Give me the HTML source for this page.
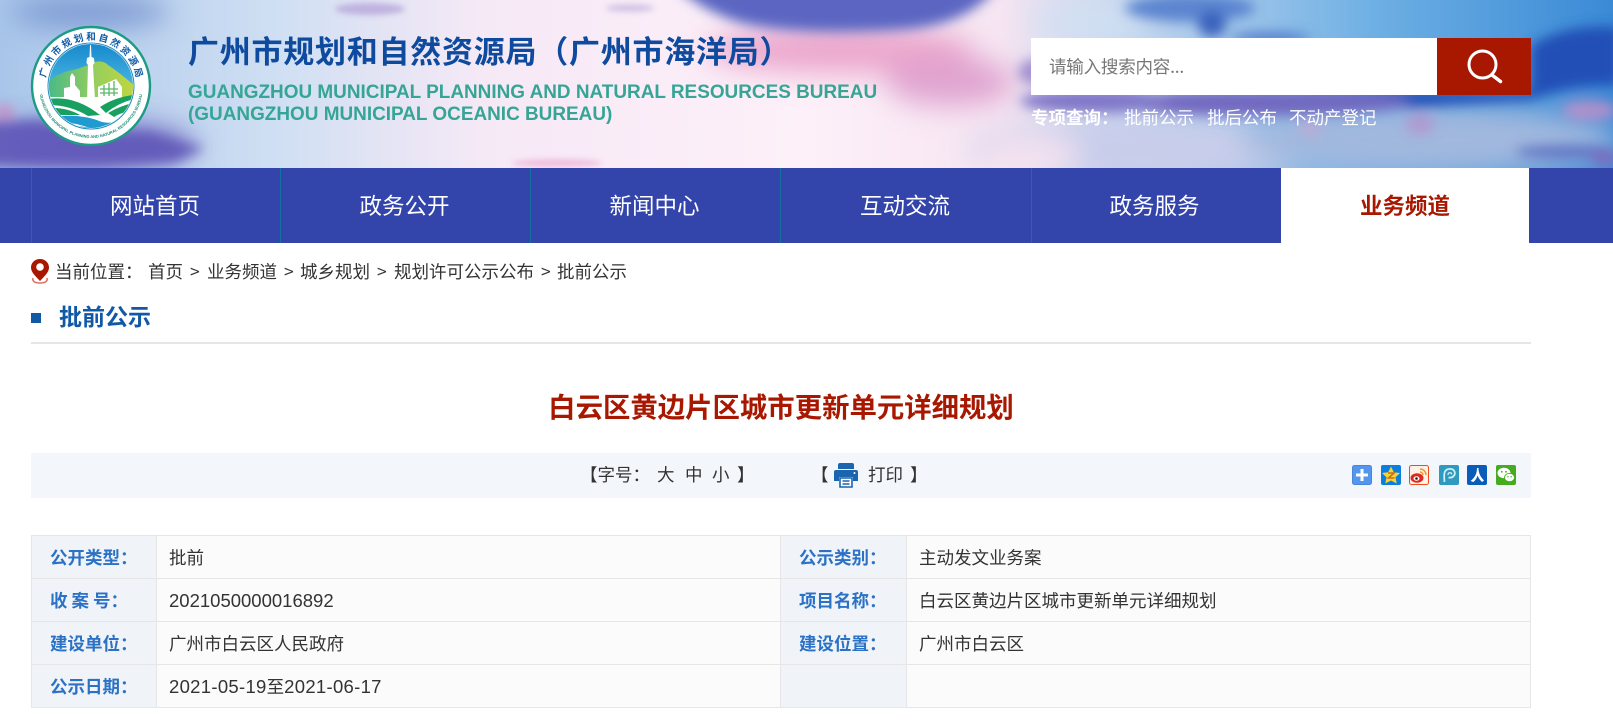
<!DOCTYPE html>
<html lang="zh"><head><meta charset="utf-8"><title>白云区黄边片区城市更新单元详细规划</title>
<style>
*{box-sizing:border-box;margin:0;padding:0}
html,body{width:1613px;height:726px;overflow:hidden;background:#fff}
body{position:relative;font-family:"Liberation Sans","Noto Sans CJK SC",sans-serif;font-size:17.5px;color:#333}
.a{position:absolute;white-space:nowrap;font-family:"Noto Sans CJK SC","Liberation Sans",sans-serif}
.nav{position:absolute;left:0;top:168px;width:1613px;height:75px;background:#3344aa}
.nav div{position:absolute;top:0;height:75px;line-height:75px;text-align:center;color:#fff;font-size:22.5px;border-left:1px solid #14709f;padding-right:2px;font-family:"Noto Sans CJK SC",sans-serif}
.l{position:absolute;background:#e6e6e6}
.lab{color:#2b72c6;font-weight:700;line-height:24px}
.val{color:#333;line-height:24px}
.dg{font-size:18.5px;font-family:"Liberation Sans",sans-serif}
.dt{letter-spacing:.3px}
.bc{top:260px;line-height:24px}
</style></head><body>
<svg class="a" style="left:0;top:0" width="1613" height="168" viewBox="0 0 1613 168">
<defs>
<linearGradient id="sky" x1="0" x2="1" y1="0" y2="0">
<stop offset="0" stop-color="#a9c6ea"/><stop offset=".17" stop-color="#cfdff3"/><stop offset=".3" stop-color="#f6e9f6"/><stop offset=".5" stop-color="#fdf0f9"/><stop offset=".62" stop-color="#f6e5f2"/><stop offset=".7" stop-color="#c3d5ee"/><stop offset=".85" stop-color="#6fb0e4"/><stop offset="1" stop-color="#3a8ad6"/>
</linearGradient>
<filter id="b1" x="-50%" y="-100%" width="200%" height="300%"><feGaussianBlur stdDeviation="14"/></filter>
<filter id="b2" x="-30%" y="-60%" width="160%" height="220%"><feGaussianBlur stdDeviation="6"/></filter>
<filter id="b3" x="-30%" y="-60%" width="160%" height="220%"><feGaussianBlur stdDeviation="3"/></filter>
</defs>
<rect width="1613" height="168" fill="url(#sky)"/>
<g filter="url(#b1)">
<ellipse cx="90" cy="12" rx="80" ry="15" fill="#6f8ccc" opacity=".85"/>
<ellipse cx="840" cy="50" rx="135" ry="24" fill="#eaa2ca" opacity=".95"/>
<ellipse cx="950" cy="82" rx="65" ry="24" fill="#dd9ccc" opacity=".9"/>
<ellipse cx="1140" cy="150" rx="170" ry="34" fill="#c8cdea"/>
<ellipse cx="1430" cy="140" rx="190" ry="34" fill="#a2b8de"/>
<ellipse cx="1030" cy="155" rx="50" ry="20" fill="#f4e2f0"/>
<ellipse cx="1090" cy="22" rx="60" ry="22" fill="#cfe0f3" opacity=".8"/>
<ellipse cx="90" cy="145" rx="105" ry="24" fill="#7068c2" opacity=".85"/>
</g>
<g filter="url(#b2)">
<path d="M-20 122 L40 120 L95 132 L150 132 L205 148 L175 162 L100 166 L-20 166Z" fill="#6158b8" opacity=".9"/>
<ellipse cx="4" cy="112" rx="10" ry="7" fill="#c98cc4"/>
<path d="M670 -20 L1000 -20 Q975 25 900 30 Q800 36 745 24 Q700 12 670 -20Z" fill="#5b66c2"/>
<ellipse cx="1190" cy="8" rx="65" ry="14" fill="#4e78cb" opacity=".85"/>
<ellipse cx="1212" cy="24" rx="14" ry="13" fill="#3a62bc"/>
<ellipse cx="1270" cy="38" rx="40" ry="5" fill="#4a72c8"/>
<path d="M1531 45 Q1570 22 1620 28 L1620 85 Q1570 84 1531 100 L1400 108 L1300 100 V90 H1531Z" fill="#2050b6"/>
<ellipse cx="1260" cy="103" rx="150" ry="13" fill="#7269c0"/>
<ellipse cx="1095" cy="101" rx="75" ry="12" fill="#8077c8"/>
<ellipse cx="1040" cy="72" rx="22" ry="14" fill="#a190cf"/>
<ellipse cx="1590" cy="110" rx="28" ry="10" fill="#c78ec8" opacity=".8"/>
<ellipse cx="1565" cy="152" rx="50" ry="7" fill="#5c6ec0" opacity=".85"/>
<ellipse cx="1420" cy="124" rx="14" ry="10" fill="#bd86c4" opacity=".6"/>
<ellipse cx="1310" cy="128" rx="12" ry="7" fill="#d8a0cc" opacity=".5"/>
<ellipse cx="1605" cy="158" rx="14" ry="9" fill="#8068bc" opacity=".8"/>
</g>
<g filter="url(#b3)">
<ellipse cx="370" cy="9" rx="35" ry="6" fill="#b7a6da" opacity=".8"/>
<ellipse cx="630" cy="8" rx="24" ry="4" fill="#c4b4de" opacity=".7"/>
<ellipse cx="557" cy="163" rx="45" ry="4" fill="#eeb4d8" opacity=".8"/>
</g>
</svg>

<svg class="a" style="left:30px;top:25px;filter:blur(.35px)" width="122" height="122" viewBox="0 0 122 122">
<defs><clipPath id="c"><circle cx="61" cy="61" r="42"/></clipPath>
<path id="tp1" d="M15 61 A46 46 0 0 1 107 61"/><path id="tp2" d="M9 61 A52 52 0 0 0 113 61"/>
<linearGradient id="lg" x1="0" x2="1"><stop offset="0" stop-color="#45b88a"/><stop offset=".6" stop-color="#9ccf5a"/><stop offset="1" stop-color="#c2d63e"/></linearGradient>
<linearGradient id="sk" x1="0" x2="0" y1="0" y2="1"><stop offset="0" stop-color="#1285cb"/><stop offset=".6" stop-color="#55bfe6"/></linearGradient></defs>
<circle cx="61" cy="61" r="59" fill="#fff" stroke="#1d9b84" stroke-width="2.4"/>
<circle cx="61" cy="61" r="43" fill="#fff" stroke="#1e8cc0" stroke-width="1"/>
<g clip-path="url(#c)">
<rect x="15" y="15" width="92" height="92" fill="url(#sk)"/>
<path d="M15 58 Q25 50 38 46 Q50 44 62 38 Q72 34 78 40 Q90 48 106 62 L106 80 L15 80Z" fill="url(#lg)"/>
<path d="M57 75 L58 40 L56.500 38 L57 33 L59.500 32 L60 20 L61 20 L61.500 32 L64 33 L64.500 38 L63 40 L65 75Z" fill="#fff"/>
<path d="M34 72 V63 L40 62 V52 L42 48 L45 52 V60 L50 66 V72Z" fill="#fff"/>
<path d="M68 72 V62 L86 54 L92 62 V72Z" fill="#fff"/>
<path d="M70 64 H88 M70 68 H88 M74 60 V71 M79 58 V71 M84 56 V71" stroke="#5bb86a" stroke-width="1.300"/>
<path d="M15 72 H106 V112 H15Z" fill="#fff"/>
<path d="M18 74 Q45 70 70 90 L58 91 Q40 80 18 80Z" fill="#18a060"/>
<path d="M18 83 Q36 82 50 90 L28 90Z" fill="#18a060"/>
<path d="M70 82 Q85 72 104 70 L104 74 Q88 78 76 88Z" fill="#18a060"/>
<path d="M78 88 Q92 80 104 78 L100 86 Q90 88 84 92Z" fill="#18a060"/>
<path d="M24 92 Q50 88 72 97 Q86 100 98 90 L92 100 Q76 106 60 103 Q40 96 26 98Z" fill="#1f9bd0"/>
<path d="M36 101 Q56 100 72 107 Q80 107 88 102 L74 110 Q50 108 36 101Z" fill="#1478c0"/>
</g>
<text font-size="9.500" font-weight="700" fill="#0f5aa5" font-family="Noto Sans CJK SC,sans-serif"><textPath href="#tp1" startOffset="50%" text-anchor="middle" textLength="128">广州市规划和自然资源局</textPath></text>
<text font-size="4" font-weight="700" fill="#1d8c78" font-family="Liberation Sans,sans-serif"><textPath href="#tp2" startOffset="50%" text-anchor="middle">GUANGZHOU MUNICIPAL PLANNING AND NATURAL RESOURCES BUREAU</textPath></text>
</svg>

<div class="a" style="left:188px;top:28px;line-height:44px;font-size:31px;font-weight:700;color:#0e4a9e;letter-spacing:.75px;filter:blur(.35px)">广州市规划和自然资源局（广州市海洋局）</div>
<div class="a" style="left:188px;top:81px;line-height:24px;font-family:'Liberation Sans',sans-serif;font-size:18.950px;font-weight:700;color:#36a596;filter:blur(.3px)">GUANGZHOU MUNICIPAL PLANNING AND NATURAL RESOURCES BUREAU</div>
<div class="a" style="left:188px;top:103px;line-height:24px;font-family:'Liberation Sans',sans-serif;font-size:18.950px;font-weight:700;color:#36a596;filter:blur(.3px)">(GUANGZHOU MUNICIPAL OCEANIC BUREAU)</div>

<div class="a" style="left:1031px;top:38px;width:406px;height:57px;background:#fff"></div>
<div class="a" style="left:1049px;top:54px;line-height:26px;color:#777;letter-spacing:-.2px">请输入搜索内容...</div>
<div class="a" style="left:1437px;top:38px;width:94px;height:57px;background:#a81700"></div>
<svg class="a" style="left:1465px;top:48px" width="38" height="38" viewBox="0 0 38 38"><circle cx="17.500" cy="16.500" r="13.500" fill="none" stroke="#fff" stroke-width="3"/><path d="M27 27 L35.500 33.500" stroke="#fff" stroke-width="3.500" stroke-linecap="round"/></svg>
<div class="a" style="left:1031px;top:105px;line-height:26px;color:#fff;font-weight:700">专项查询：</div>
<div class="a" style="left:1124px;top:105px;line-height:26px;color:#fff">批前公示</div>
<div class="a" style="left:1207px;top:105px;line-height:26px;color:#fff">批后公布</div>
<div class="a" style="left:1289px;top:105px;line-height:26px;color:#fff">不动产登记</div>

<div class="nav">
<div style="left:31px;width:249px">网站首页</div>
<div style="left:280px;width:250px">政务公开</div>
<div style="left:530px;width:250px">新闻中心</div>
<div style="left:780px;width:251px">互动交流</div>
<div style="left:1031px;width:250px;padding-right:4px">政务服务</div>
<div style="left:1281px;width:248px;background:#fff;color:#a81700;font-weight:700;border:0;padding-right:0">业务频道</div>
</div>

<svg class="a" style="left:30px;top:258px" width="20" height="26" viewBox="0 0 20 26"><path d="M10 1 C4.500 1 1 5 1 9.500 C1 14.500 6 18.500 10 23 C14 18.500 19 14.500 19 9.500 C19 5 15.500 1 10 1Z" fill="#a81700"/><circle cx="10" cy="9" r="3.800" fill="#fff"/><path d="M3 20 C2 24 6 25 10 25 C14 25 18 24 17 20" fill="none" stroke="#d4715e" stroke-width="1.500"/></svg>
<div class="a bc" style="left:55px">当前位置：</div>
<div class="a bc" style="left:148px">首页</div>
<div class="a bc" style="left:190px">&gt;</div>
<div class="a bc" style="left:207px">业务频道</div>
<div class="a bc" style="left:284px">&gt;</div>
<div class="a bc" style="left:300px">城乡规划</div>
<div class="a bc" style="left:377px">&gt;</div>
<div class="a bc" style="left:394px">规划许可公示公布</div>
<div class="a bc" style="left:541px">&gt;</div>
<div class="a bc" style="left:557px">批前公示</div>

<div class="a" style="left:31px;top:313px;width:10px;height:10px;background:#1158a5"></div>
<div class="a" style="left:59px;top:300px;line-height:30px;font-size:23px;font-weight:700;color:#1158a5">批前公示</div>
<div class="a" style="left:31px;top:342px;width:1500px;height:2px;background:#e6e6e6"></div>

<div class="a" style="left:31px;top:385px;width:1500px;text-align:center;line-height:40px;font-size:27.400px;font-weight:700;color:#a81700">白云区黄边片区城市更新单元详细规划</div>

<div class="a" style="left:31px;top:453px;width:1500px;height:45px;background:#f3f7fb"></div>
<div class="a" style="left:580px;top:463px;line-height:24px">【字号：</div>
<div class="a" style="left:657px;top:463px;line-height:24px">大</div>
<div class="a" style="left:685px;top:463px;line-height:24px">中</div>
<div class="a" style="left:712px;top:463px;line-height:24px">小</div>
<div class="a" style="left:737px;top:463px;line-height:24px">】</div>
<div class="a" style="left:811px;top:463px;line-height:24px">【</div>
<svg class="a" style="left:833px;top:462px" width="26" height="26" viewBox="0 0 26 26"><path d="M5 3 Q5 1 7 1 H19 Q21 1 21 3 V7 H5Z" fill="#1b64ae"/><path d="M3 8 H23 Q25 8 25 10 V19 H20 V15 H6 V19 H1 V10 Q1 8 3 8Z" fill="#1b64ae"/><path d="M7 16 H19 V25 H7Z" fill="#fff" stroke="#1b64ae" stroke-width="1.600"/><path d="M9.500 19 H16.500 M9.500 22 H16.500" stroke="#1b64ae" stroke-width="1.400"/><circle cx="21.500" cy="11" r="1" fill="#fff"/></svg>
<div class="a" style="left:868px;top:463px;line-height:24px">打印</div>
<div class="a" style="left:910px;top:463px;line-height:24px">】</div>

<svg class="a" style="left:1352px;top:465px;filter:blur(.25px)" width="175" height="20" viewBox="0 0 175 20">
<rect x=".5" y=".5" width="19" height="19" rx="2" fill="#5495ee" stroke="#4a86d8"/><path d="M10 4 V16 M4 10 H16" stroke="#fff" stroke-width="3"/>
<g transform="translate(29,0)"><rect width="20" height="20" rx="2" fill="#0a7fe0"/><path d="M10 1.500 L12.800 7.200 L19 8 L14.500 12.300 L15.700 18.500 L10 15.500 L4.300 18.500 L5.500 12.300 L1 8 L7.200 7.200Z" fill="#f7d335"/><path d="M7 8 H13 L7.500 13 H13.500" fill="none" stroke="#c8701c" stroke-width="1.600"/></g>
<g transform="translate(57,0)"><rect x=".5" y=".5" width="19" height="19" rx="2" fill="#fdf1e8" stroke="#ee4a1c"/><ellipse cx="8" cy="13" rx="6.500" ry="4.800" fill="#d92a24"/><ellipse cx="7.500" cy="13.500" rx="3" ry="2.300" fill="#fff"/><circle cx="7.500" cy="13.500" r="1.300" fill="#222"/><path d="M11 4 A6 6 0 0 1 17 10 M11 7 A3 3 0 0 1 14 10" fill="none" stroke="#ef9a30" stroke-width="1.500"/></g>
<g transform="translate(87,0)"><rect width="20" height="20" rx="2" fill="#2e9ac0"/><path d="M5.500 17 C5 12 5 8 6 6.500 C8 3 14 3 15.500 6.500 C17 10 13.500 13.500 9.500 12.500" fill="none" stroke="#cfeef6" stroke-width="1.800"/><path d="M9 10 C9 7 13 7 12.800 9.500" fill="none" stroke="#cfeef6" stroke-width="1.300"/></g>
<g transform="translate(115,0)"><rect width="20" height="20" rx="2" fill="#0a5cb8"/><path d="M10 3 C10 9 7.500 13 3.500 16 L6.500 17 C8.500 15 10 13 10.500 10.500 C11.500 13 13 15 15 17 L17 15.500 C13.500 12 11.500 8 11.500 3Z" fill="#fff"/></g>
<g transform="translate(144,0)"><rect width="20" height="20" rx="2" fill="#44ac1e"/><ellipse cx="8" cy="8" rx="6.500" ry="5.200" fill="#fff"/><ellipse cx="13.500" cy="12.500" rx="5" ry="4.200" fill="#fff" stroke="#44ac1e" stroke-width=".8"/><circle cx="5.800" cy="6.800" r=".9" fill="#44ac1e"/><circle cx="10" cy="6.800" r=".9" fill="#44ac1e"/><circle cx="12" cy="11.800" r=".7" fill="#44ac1e"/><circle cx="15.200" cy="11.800" r=".7" fill="#44ac1e"/></g>
</svg>

<div class="a" style="left:31px;top:535px;width:1500px;height:173px;background:#fbfbfb"></div>
<div class="a" style="left:31px;top:535px;width:126px;height:173px;background:#f0f3f8"></div>
<div class="a" style="left:780px;top:535px;width:127px;height:173px;background:#f0f3f8"></div>
<div class="l" style="left:31px;top:535px;width:1500px;height:1px"></div>
<div class="l" style="left:31px;top:578px;width:1500px;height:1px"></div>
<div class="l" style="left:31px;top:621px;width:1500px;height:1px"></div>
<div class="l" style="left:31px;top:664px;width:1500px;height:1px"></div>
<div class="l" style="left:31px;top:707px;width:1500px;height:1px"></div>
<div class="l" style="left:31px;top:535px;width:1px;height:173px"></div>
<div class="l" style="left:156px;top:535px;width:1px;height:173px"></div>
<div class="l" style="left:780px;top:535px;width:1px;height:173px"></div>
<div class="l" style="left:906px;top:535px;width:1px;height:173px"></div>
<div class="l" style="left:1530px;top:535px;width:1px;height:173px"></div>

<div class="a lab" style="left:50px;top:546px">公开类型：</div>
<div class="a val" style="left:169px;top:546px">批前</div>
<div class="a lab" style="left:799px;top:546px">公示类别：</div>
<div class="a val" style="left:919px;top:546px">主动发文业务案</div>

<div class="a lab" style="left:50px;top:589px">收 案 号：</div>
<div class="a val dg" style="left:169px;top:589px">2021050000016892</div>
<div class="a lab" style="left:799px;top:589px">项目名称：</div>
<div class="a val" style="left:919px;top:589px">白云区黄边片区城市更新单元详细规划</div>

<div class="a lab" style="left:50px;top:632px">建设单位：</div>
<div class="a val" style="left:169px;top:632px">广州市白云区人民政府</div>
<div class="a lab" style="left:799px;top:632px">建设位置：</div>
<div class="a val" style="left:919px;top:632px">广州市白云区</div>

<div class="a lab" style="left:50px;top:675px">公示日期：</div>
<div class="a val" style="left:169px;top:675px"><span class="dg dt">2021-05-19</span>至<span class="dg dt">2021-06-17</span></div>
</body></html>
